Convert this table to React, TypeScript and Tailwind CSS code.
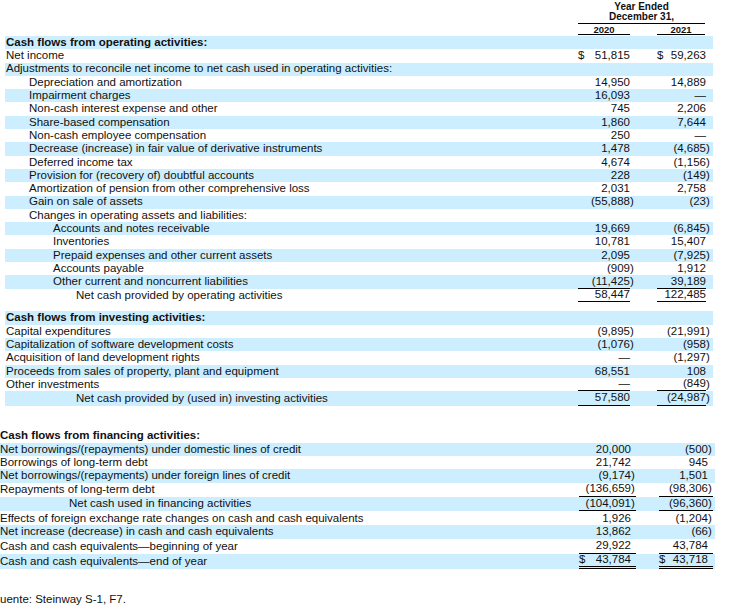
import React from "react";

type Row = {
  label: string;
  bold?: boolean;
  pl?: string;
  a?: string;
  b?: string;
  dollar?: boolean;
  ul?: boolean;
  dbl?: boolean;
  blue?: boolean;
  h?: string;
};

type Spec = {
  labelW: string;
  in1: string;
  gap: string;
  in2: string;
  full: boolean;
};

const opSpec: Spec = { labelW: "w-[573px]", in1: "w-[52px]", gap: "w-[22px]", in2: "w-[49px]", full: false };
const finSpec: Spec = { labelW: "w-[579px]", in1: "w-[52px]", gap: "w-[23px]", in2: "w-[49px]", full: true };

function Cell({ v, dollar, ul, dbl, full, innerW }: { v?: string; dollar?: boolean; ul?: boolean; dbl?: boolean; full: boolean; innerW: string }) {
  const neg = !!v && v.startsWith("(");
  const txt = neg ? v!.slice(0, -1) : v;
  const border = dbl ? "border-b-[3px] border-double border-black" : ul ? "border-b border-black" : "";
  return (
    <div className={`flex h-full shrink-0 ${full ? border : ""}`}>
      <div className={`${innerW} h-full flex items-center ${dollar ? "justify-between" : "justify-end"} ${full ? "" : border}`}>
        {dollar && <span>$</span>}
        <span>{txt}</span>
      </div>
      <div className="w-[5px] h-full flex items-center">{neg ? ")" : ""}</div>
    </div>
  );
}

function TableRow({ r, spec }: { r: Row; spec: Spec }) {
  return (
    <div className={`flex ${r.h ?? "h-[13.3px]"} ${r.blue ? "bg-[#cceeff]" : ""}`}>
      <div className={`${spec.labelW} shrink-0 h-full flex items-center whitespace-nowrap ${r.pl ?? "pl-[1px]"} ${r.bold ? "font-bold" : ""}`}>
        {r.label}
      </div>
      <Cell v={r.a} dollar={r.dollar} ul={r.ul} dbl={r.dbl} full={spec.full} innerW={spec.in1} />
      <div className={`${spec.gap} shrink-0`} />
      <Cell v={r.b} dollar={r.dollar} ul={r.ul} dbl={r.dbl} full={spec.full} innerW={spec.in2} />
      <div className="flex-1" />
    </div>
  );
}

const L1 = "pl-[24px]";
const L2 = "pl-[48px]";
const L3 = "pl-[71px]";

const operating: Row[] = [
  { label: "Cash flows from operating activities:", bold: true },
  { label: "Net income", a: "51,815", b: "59,263", dollar: true },
  { label: "Adjustments to reconcile net income to net cash used in operating activities:" },
  { label: "Depreciation and amortization", pl: L1, a: "14,950", b: "14,889" },
  { label: "Impairment charges", pl: L1, a: "16,093", b: "—" },
  { label: "Non-cash interest expense and other", pl: L1, a: "745", b: "2,206" },
  { label: "Share-based compensation", pl: L1, a: "1,860", b: "7,644" },
  { label: "Non-cash employee compensation", pl: L1, a: "250", b: "—" },
  { label: "Decrease (increase) in fair value of derivative instruments", pl: L1, a: "1,478", b: "(4,685)" },
  { label: "Deferred income tax", pl: L1, a: "4,674", b: "(1,156)" },
  { label: "Provision for (recovery of) doubtful accounts", pl: L1, a: "228", b: "(149)" },
  { label: "Amortization of pension from other comprehensive loss", pl: L1, a: "2,031", b: "2,758" },
  { label: "Gain on sale of assets", pl: L1, a: "(55,888)", b: "(23)" },
  { label: "Changes in operating assets and liabilities:", pl: L1 },
  { label: "Accounts and notes receivable", pl: L2, a: "19,669", b: "(6,845)" },
  { label: "Inventories", pl: L2, a: "10,781", b: "15,407" },
  { label: "Prepaid expenses and other current assets", pl: L2, a: "2,095", b: "(7,925)" },
  { label: "Accounts payable", pl: L2, a: "(909)", b: "1,912" },
  { label: "Other current and noncurrent liabilities", pl: L2, a: "(11,425)", b: "39,189", ul: true },
  { label: "Net cash provided by operating activities", pl: L3, a: "58,447", b: "122,485", ul: true },
].map((r, i) => ({ ...r, blue: i % 2 === 0 }));

const investing: Row[] = [
  { label: "Cash flows from investing activities:", bold: true },
  { label: "Capital expenditures", a: "(9,895)", b: "(21,991)" },
  { label: "Capitalization of software development costs", a: "(1,076)", b: "(958)" },
  { label: "Acquisition of land development rights", a: "—", b: "(1,297)" },
  { label: "Proceeds from sales of property, plant and equipment", a: "68,551", b: "108" },
  { label: "Other investments", a: "—", b: "(849)", ul: true },
  { label: "Net cash provided by (used in) investing activities", pl: L3, a: "57,580", b: "(24,987)", ul: true, h: "h-[14.5px]" },
].map((r, i) => ({ ...r, blue: i % 2 === 0 }));

const financing: Row[] = [
  { label: "Cash flows from financing activities:", bold: true, pl: "pl-0" },
  { label: "Net borrowings/(repayments) under domestic lines of credit", pl: "pl-0", a: "20,000", b: "(500)" },
  { label: "Borrowings of long-term debt", pl: "pl-0", a: "21,742", b: "945" },
  { label: "Net borrowings/(repayments) under foreign lines of credit", pl: "pl-0", a: "(9,174)", b: "1,501" },
  { label: "Repayments of long-term debt", pl: "pl-0", a: "(136,659)", b: "(98,306)", ul: true, h: "h-[14.3px]" },
  { label: "Net cash used in financing activities", pl: "pl-[69px]", a: "(104,091)", b: "(96,360)", ul: true, h: "h-[14.5px]" },
  { label: "Effects of foreign exchange rate changes on cash and cash equivalents", pl: "pl-0", a: "1,926", b: "(1,204)", h: "h-[14px]" },
  { label: "Net increase (decrease) in cash and cash equivalents", pl: "pl-0", a: "13,862", b: "(66)", h: "h-[13.5px]" },
  { label: "Cash and cash equivalents—beginning of year", pl: "pl-0", a: "29,922", b: "43,784", ul: true, h: "h-[15px]" },
  { label: "Cash and cash equivalents—end of year", pl: "pl-0", a: "43,784", b: "43,718", dollar: true, dbl: true, h: "h-[15px]" },
].map((r, i) => ({ ...r, blue: i > 0 && i % 2 === 1 }));

export default function App() {
  return (
    <div className="w-[733px] h-[609px] overflow-hidden bg-white text-[#111] text-[11.5px] leading-none font-['Liberation_Sans',Arial,sans-serif]">
      {/* Header */}
      <div className="ml-[5px] w-[708px] h-[36px] flex">
        <div className="w-[573px] shrink-0" />
        <div className="w-[127px] shrink-0 flex flex-col font-bold text-[10px]">
          <div className="pt-[2px] h-[12px] leading-[10px] text-center">Year Ended</div>
          <div className="h-[10px] leading-[10px] text-center">December 31,</div>
          <div className="h-[2px] border-b border-black" />
          <div className="flex h-[11px] text-[9.5px] leading-[9px]">
            <div className="w-[52px] pt-[1px] text-center border-b border-black">2020</div>
            <div className="w-[27px]" />
            <div className="w-[48px] pt-[1px] text-center border-b border-black">2021</div>
          </div>
        </div>
      </div>

      {/* Operating */}
      <div className="ml-[5px] w-[708px] flex flex-col">
        {operating.map((r, i) => (
          <TableRow key={i} r={r} spec={opSpec} />
        ))}
      </div>

      <div className="h-[9.5px]" />

      {/* Investing */}
      <div className="ml-[5px] w-[708px] flex flex-col">
        {investing.map((r, i) => (
          <TableRow key={i} r={r} spec={opSpec} />
        ))}
      </div>

      <div className="h-[23.7px]" />

      {/* Financing */}
      <div className="w-[715px] flex flex-col">
        {financing.map((r, i) => (
          <TableRow key={i} r={r} spec={finSpec} />
        ))}
      </div>

      <div className="h-[24px]" />
      <div className="h-[13.3px] flex items-center whitespace-nowrap">uente: Steinway S-1, F7.</div>
    </div>
  );
}
